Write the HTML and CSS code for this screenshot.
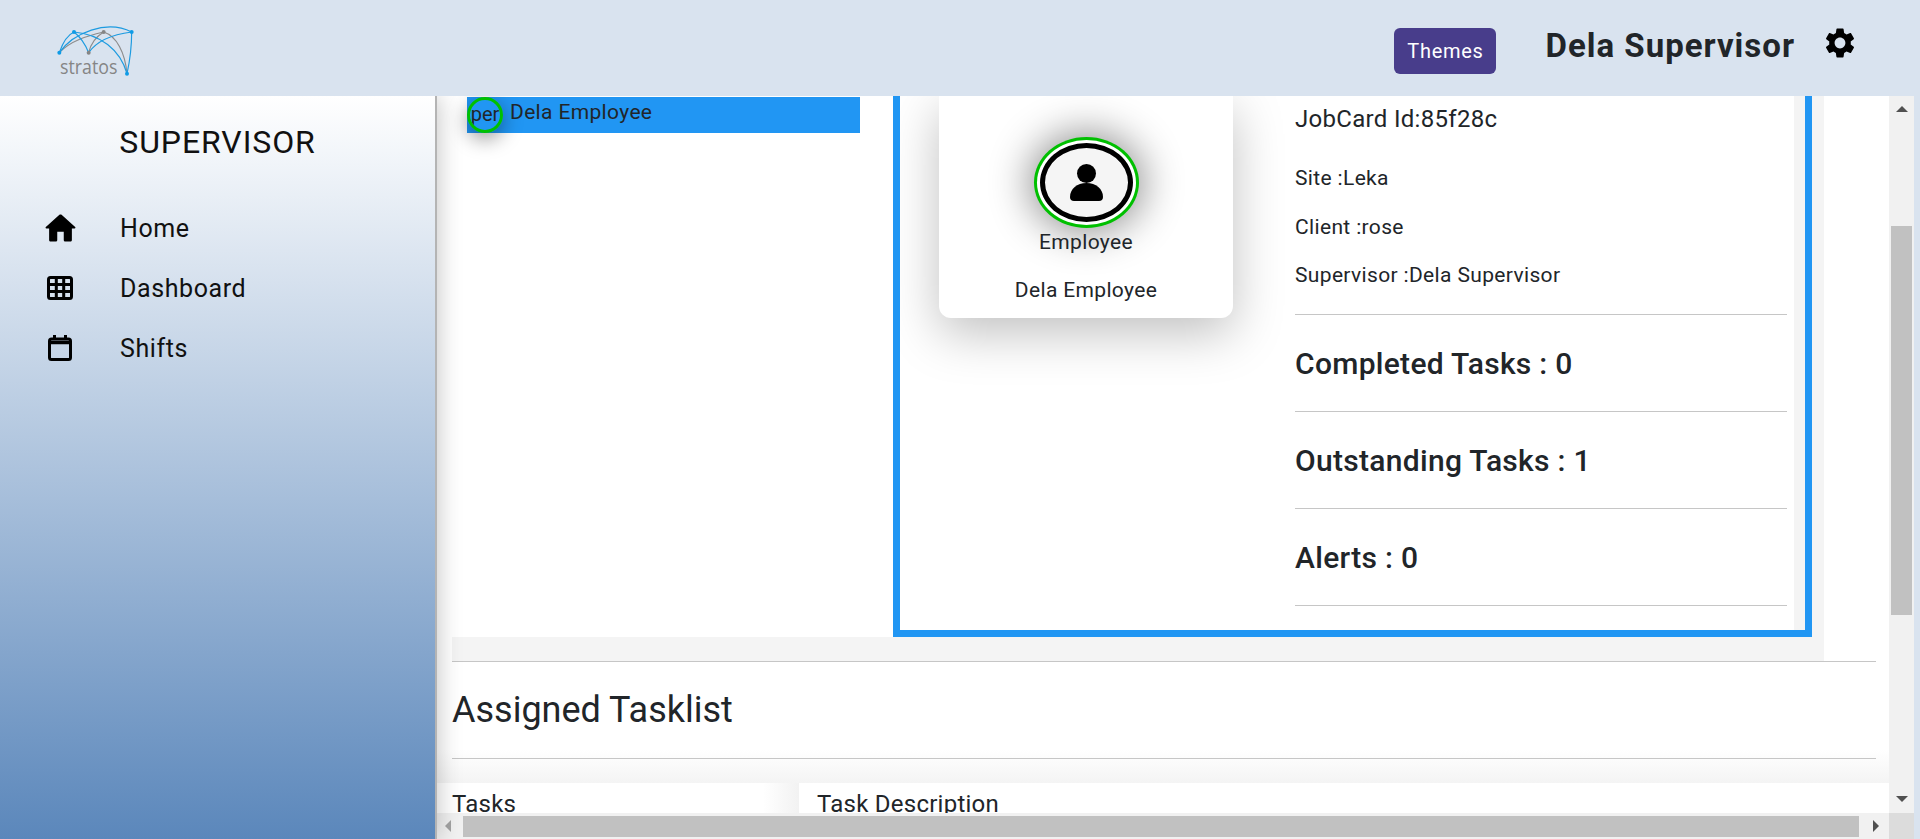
FILE: index.html
```html
<!DOCTYPE html>
<html lang="en">
<head>
	<meta charset="UTF-8">
	<meta name="viewport" content="width=device-width, initial-scale=1.0">
	<title>Supervisor</title>
	<link rel="stylesheet" href="styles.css">
</head>
<body>
	<header class="topbar">
		<svg class="logo" viewBox="0 0 390 270" width="130" height="90">
			<g class="logo-grey">
				<path d="M88 140C120 105 170 90 221 78"/>
				<path d="M176 140Q185 100 221 78"/>
				<path d="M221 78C260 90 285 140 291 203"/>
			</g>
			<g class="logo-blue">
				<path d="M88 140Q105 90 132 78"/>
				<path d="M88 140C130 80 230 40 305 78"/>
				<path d="M132 78C210 85 270 130 291 203"/>
				<path d="M305 78Q305 140 291 203"/>
				<path d="M132 78Q160 100 176 140"/>
				<path d="M176 140C200 105 250 85 305 78"/>
			</g>
			<circle class="dot-blue" cx="88" cy="140" r="6"/>
			<circle class="dot-blue" cx="132" cy="78" r="6"/>
			<circle class="dot-blue" cx="305" cy="78" r="6"/>
			<circle class="dot-blue" cx="291" cy="203" r="6"/>
			<circle class="dot-grey" cx="176" cy="140" r="6"/>
			<circle class="dot-grey" cx="221" cy="78" r="6"/>
			<text class="logo-text" x="90" y="205" textLength="172" lengthAdjust="spacingAndGlyphs">stratos</text>
		</svg>
		<button class="themes">Themes</button>
		<span class="username">Dela Supervisor</span>
		<svg class="gear" viewBox="0 0 24 24" width="36" height="36">
			<path d="M19.14 12.94c.04-.3.06-.61.06-.94 0-.32-.02-.64-.07-.94l2.03-1.58c.18-.14.23-.41.12-.61l-1.92-3.32c-.12-.22-.37-.29-.59-.22l-2.39.96c-.5-.38-1.03-.7-1.62-.94l-.36-2.54c-.04-.24-.24-.41-.48-.41h-3.84c-.24 0-.43.17-.47.41l-.36 2.54c-.59.24-1.13.57-1.62.94l-2.39-.96c-.22-.08-.47 0-.59.22L2.74 8.87c-.12.21-.08.47.12.61l2.03 1.58c-.05.3-.09.63-.09.94s.02.64.07.94l-2.03 1.58c-.18.14-.23.41-.12.61l1.92 3.32c.12.22.37.29.59.22l2.39-.96c.5.38 1.03.7 1.62.94l.36 2.54c.05.24.24.41.48.41h3.84c.24 0 .44-.17.47-.41l.36-2.54c.59-.24 1.13-.56 1.62-.94l2.39.96c.22.08.47 0 .59-.22l1.92-3.32c.12-.22.07-.47-.12-.61l-2.01-1.58zM12 15.6c-1.98 0-3.6-1.62-3.6-3.6s1.62-3.6 3.6-3.6 3.6 1.62 3.6 3.6-1.62 3.6-3.6 3.6z"/>
		</svg>
	</header>

	<div class="layout">
		<aside class="sidebar">
			<h2 class="role">SUPERVISOR</h2>
			<nav class="menu">
				<a class="menu-item">
					<span class="menu-icon">
						<svg viewBox="0 0 24 24" width="39" height="39"><path d="M10 19v-5h4v5c0 .55.45 1 1 1h3c.55 0 1-.45 1-1v-7h1.7c.46 0 .68-.57.33-.87L12.67 3.6c-.38-.34-.96-.34-1.34 0l-8.36 7.53c-.34.3-.13.87.33.87H5v7c0 .55.45 1 1 1h3c.55 0 1-.45 1-1z"/></svg>
					</span>
					Home
				</a>
				<a class="menu-item">
					<span class="menu-icon">
						<svg class="line-icon" viewBox="0 0 26 24" width="26" height="24">
							<rect x="1.500" y="1.500" width="23" height="21" rx="2"/>
							<path d="M9.300 1v22M16.700 1v22M1 8.500h24M1 15.500h24"/>
						</svg>
					</span>
					Dashboard
				</a>
				<a class="menu-item">
					<span class="menu-icon">
						<svg class="line-icon" viewBox="0 0 24 26" width="24" height="26">
							<rect x="1.500" y="4" width="21" height="20.500" rx="2"/>
							<path class="thick" d="M1 7.500h22"/>
							<path d="M6.500 0v4M17.500 0v4"/>
						</svg>
					</span>
					Shifts
				</a>
			</nav>
		</aside>

		<main class="main">
			<div class="content">
				<section class="band">
					<div class="band-row">
						<div class="people">
							<div class="person-item">
								<span class="person-badge">per</span>
								<span class="person-name">Dela Employee</span>
							</div>
						</div>
						<div class="jobcard">
							<div class="profile">
								<div class="avatar">
									<svg viewBox="0 0 33 37" width="33" height="37">
										<circle cx="16.5" cy="9.5" r="9.5"/>
										<path d="M4 37c-2.500 0-4-1.500-4-4C0 25 7 19 16.500 19S33 25 33 33c0 2.500-1.500 4-4 4z"/>
									</svg>
								</div>
								<p class="profile-role">Employee</p>
								<p class="profile-name">Dela Employee</p>
							</div>
							<div class="details">
								<p class="job-id">JobCard Id:85f28c</p>
								<p class="job-line">Site :Leka</p>
								<p class="job-line">Client :rose</p>
								<p class="job-line">Supervisor :Dela Supervisor</p>
								<div class="stat stat-first">Completed Tasks : 0</div>
								<div class="stat">Outstanding Tasks : 1</div>
								<div class="stat">Alerts : 0</div>
							</div>
						</div>
					</div>
				</section>
				<hr class="rule rule-over">
				<section class="tasklist">
					<h2 class="tasklist-title">Assigned Tasklist</h2>
					<hr class="rule">
				</section>
				<div class="task-head">
					<div class="task-col task-col-name">Tasks</div>
					<div class="task-col task-col-desc">Task Description</div>
				</div>
			</div>

			<div class="vbar">
				<span class="arrow arrow-up"></span>
				<span class="vthumb"></span>
				<span class="arrow arrow-down"></span>
			</div>
			<div class="hbar">
				<span class="arrow arrow-left"></span>
				<span class="hthumb"></span>
				<span class="arrow arrow-right"></span>
			</div>
			<div class="corner"></div>
		</main>
	</div>
</body>
</html>
```

FILE: styles.css
```css
*{
	box-sizing: border-box;
}
html, body{
	height: 100%;
}
body{
	margin: 0;
	overflow: hidden;
	background: #fff;
	color: #212529;
	font-family: Roboto, "Liberation Sans", sans-serif;
}
p, h2{
	margin: 0;
}

/* top bar */
.topbar{
	height: 96px;
	background: #d9e3ef;
	display: flex;
	align-items: center;
	padding-left: 30px;
}
.logo{
	margin-right: auto;
	margin-top: 6px;
	fill: none;
}
.logo-blue path, .logo-grey path{
	fill: none;
	stroke-width: 3.5;
}
.logo-blue path{
	stroke: #1d9be0;
}
.logo-grey path{
	stroke: #8c8c8c;
}
.dot-blue{
	fill: #0f9be6;
}
.dot-grey{
	fill: #858585;
}
.logo-text{
	fill: #858585;
	font-family: "Open Sans", sans-serif;
	font-size: 58px;
	font-weight: 400;
}
.themes{
	width: 102px;
	height: 46px;
	margin-top: 6px;
	border: 0;
	border-radius: 6px;
	background: #483d8b;
	color: #fff;
	font-family: Roboto, sans-serif;
	font-size: 20px;
	letter-spacing: .7px;
}
.username{
	margin-left: 49px;
	margin-top: -6px;
	font-size: 33px;
	font-weight: 700;
	letter-spacing: 1px;
}
.gear{
	margin-left: 27px;
	margin-right: 62px;
	margin-top: -10px;
}

/* page below the bar */
.layout{
	display: flex;
	height: 743px;
	background: #d9e3ef;
}
.sidebar{
	width: 437px;
	flex: none;
	position: relative;
	z-index: 2;
	padding-top: 28px;
	background: linear-gradient(#fff, #5b87bb);
	border-right: 2px solid #b4b4b4;
	box-shadow: 2px 0 22px rgba(0,0,0,.22);
	clip-path: inset(0 -40px 0 0);
}
.role{
	text-align: center;
	font-size: 32px;
	font-weight: 400;
	letter-spacing: .9px;
	line-height: 36px;
	color: #111;
}
.menu{
	margin-top: 38px;
}
.menu-item{
	display: flex;
	align-items: center;
	height: 60px;
	font-size: 25px;
	letter-spacing: .6px;
	color: #111;
}
.menu-icon{
	width: 120px;
	flex: none;
	display: flex;
	justify-content: center;
}
.line-icon{
	fill: none;
	stroke: #000;
	stroke-width: 3;
}
.line-icon .thick{
	stroke-width: 3.5;
}

/* scroll area */
.main{
	flex: 1;
	display: grid;
	grid-template-columns: 1fr 25px;
	grid-template-rows: 1fr 26px;
	margin-right: 6px;
	background: #fff;
}
.content{
	overflow: hidden;
	padding: 0 13px 0 15px;
	background: #fff;
	border-top-left-radius: 12px;
}
.band{
	width: 1372px;
	height: 571px;
	padding-right: 12px;
	background: #f4f4f4;
}
.band-row{
	display: flex;
	height: 541px;
}
.people{
	width: 441px;
	flex: none;
	padding: 1px 0 0 15px;
	background: #fff;
}
.person-item{
	display: flex;
	width: 393px;
	height: 36px;
	background: #2196f3;
	font-size: 21px;
	letter-spacing: .35px;
}
.person-badge{
	width: 36px;
	height: 36px;
	flex: none;
	overflow: hidden;
	border: 3px solid #00c000;
	border-radius: 50%;
	font-size: 20px;
	letter-spacing: 0;
	line-height: 28px;
	text-align: center;
	box-shadow: 0 6px 20px rgba(0,0,0,.4);
}
.person-name{
	margin-left: 7px;
	line-height: 30px;
}
.jobcard{
	flex: 1;
	display: flex;
	overflow: hidden;
	border: 7px solid #2196f3;
	border-top: 0;
	background: #fff;
}
.jobcard::after{
	content: "";
	width: 11px;
	flex: none;
	margin-left: auto;
	background: #f4f4f4;
}
.profile{
	width: 294px;
	height: 222px;
	flex: none;
	margin-left: 39px;
	padding-top: 47px;
	border-radius: 0 0 12px 12px;
	background: #fff;
	box-shadow: 0 15px 50px rgba(0,0,0,.25);
	text-align: center;
	font-size: 21px;
	letter-spacing: .35px;
	line-height: 24px;
}
.avatar{
	width: 93px;
	height: 79px;
	margin: 0 auto;
	display: flex;
	align-items: center;
	justify-content: center;
	border: 5px solid #000;
	border-radius: 50%;
	background: #f5f5f5;
	box-shadow: 0 0 0 3px #fff, 0 0 0 6px #00c000, 0 0 40px 10px rgba(0,0,0,.45);
}
.avatar svg{
	fill: #000;
}
.profile-role{
	margin-top: 8px;
}
.profile-name{
	margin-top: 24px;
}
.details{
	width: 492px;
	flex: none;
	margin-left: 62px;
	padding-top: 10px;
}
.job-id{
	font-size: 24px;
	letter-spacing: .3px;
	line-height: 26px;
	margin-bottom: 33px;
}
.job-line{
	font-size: 21px;
	letter-spacing: .35px;
	line-height: 26px;
	margin-bottom: 22.500px;
}
.stat{
	height: 97px;
	display: flex;
	align-items: center;
	border-bottom: 1px solid #c6c6c6;
	font-size: 30px;
	font-weight: 500;
	letter-spacing: .3px;
}
.stat-first{
	margin-top: 26px;
	border-top: 1px solid #c6c6c6;
	height: 98px;
}
.rule{
	margin: 0;
	border: 0;
	border-top: 1px solid #c6c6c6;
}
.rule-over{
	margin-top: -6px;
	position: relative;
}
.tasklist{
	height: 121px;
	margin: 0 -13px 0 -15px;
	padding: 0 13px 0 15px;
	background: linear-gradient(#fff 88px, #f4f4f4 121px);
}
.tasklist-title{
	padding-top: 26px;
	height: 96px;
	font-size: 36px;
	font-weight: 400;
	line-height: 44px;
}
.task-head{
	display: flex;
	margin: 0 -13px 0 -15px;
	font-size: 24px;
	letter-spacing: .25px;
	background: #fff;
}
.task-col{
	height: 60px;
	padding-top: 7px;
}
.task-col-name{
	width: 362px;
	padding-left: 15px;
	background: linear-gradient(90deg, #fff 90%, #f2f2f2);
}
.task-col-desc{
	flex: 1;
	padding-left: 18px;
}

/* fake scrollbars */
.vbar{
	background: #f1f1f1;
	display: flex;
	flex-direction: column;
	align-items: center;
}
.vthumb{
	width: 21px;
	height: 389px;
	margin-top: 114px;
	background: #c1c1c1;
}
.hbar{
	background: #f1f1f1;
	display: flex;
	align-items: center;
	padding-left: 8px;
}
.hthumb{
	width: 1396px;
	height: 21px;
	margin-left: 12px;
	background: #c1c1c1;
}
.corner{
	background: #dcdcdc;
}
.arrow{
	width: 0;
	height: 0;
	flex: none;
	border-style: solid;
	border-color: transparent;
}
.arrow-up{
	margin-top: 10px;
	border-width: 0 6px 6px;
	border-bottom-color: #505050;
}
.arrow-down{
	margin-top: 181px;
	border-width: 6px 6px 0;
	border-top-color: #505050;
}
.arrow-left{
	border-width: 6px 6px 6px 0;
	border-right-color: #a3a3a3;
}
.arrow-right{
	margin-left: 14px;
	border-width: 6px 0 6px 6px;
	border-left-color: #505050;
}
```
